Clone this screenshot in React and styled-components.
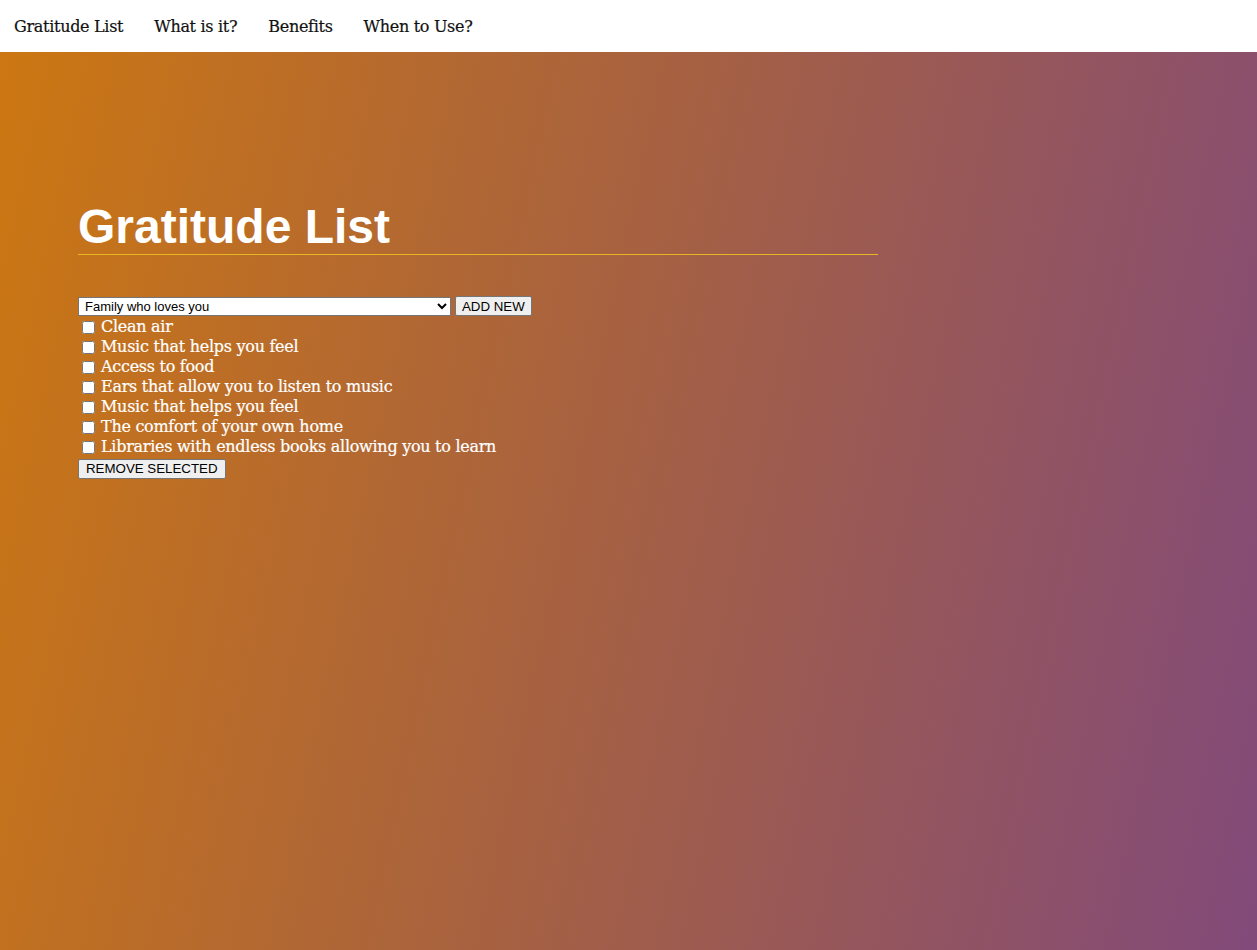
import React from "react";
import styled, { createGlobalStyle } from "styled-components";

const Global = createGlobalStyle`
  html, body { margin: 0; padding: 0; }
  body { font-family: "DejaVu Serif", serif; }
`;

const Nav = styled.nav`
  height: 52px;
  background: #ffffff;
  display: flex;
  align-items: center;
  padding-left: 14px;
  gap: 31px;
`;

const NavLink = styled.a`
  font-family: "DejaVu Serif", serif;
  font-size: 16px;
  color: #111;
  text-decoration: none;
  letter-spacing: -0.3px;
  -webkit-text-stroke: 0.2px #111;
`;

const Main = styled.main`
  min-height: 898px;
  background: linear-gradient(102deg, #cc7712 0%, #a8623f 45%, #824a7a 100%);
  padding: 148px 78px 0;
  box-sizing: border-box;
`;

const Title = styled.h1`
  font-family: "Liberation Sans", Arial, sans-serif;
  font-weight: 700;
  font-size: 48px;
  color: #fff;
  margin: 0;
  width: 800px;
  line-height: 54px;
  border-bottom: 1px solid #e6b624;
`;

const Controls = styled.div`
  margin-top: 41px;
  display: flex;
  align-items: center;
  gap: 4px;
`;

const Select = styled.select`
  width: 373px;
  height: 19px;
  font-family: "Liberation Sans", Arial, sans-serif;
  font-size: 13px;
  padding: 0 0 0 2px;
  border: 1px solid #767676;
  border-radius: 0;
  background: #fff;
  color: #000;
`;

const Button = styled.button`
  font-family: "Liberation Sans", Arial, sans-serif;
  font-size: 13.3px;
  height: 20px;
  padding: 0 ${(p) => p.$pad || 6}px;
  background: #efefef;
  border: 1px solid #767676;
  border-radius: 2px;
  color: #000;
`;

const List = styled.ul`
  list-style: none;
  margin: 1px 0 0;
  padding: 0;
`;

const Item = styled.li`
  font-family: "DejaVu Serif", serif;
  font-size: 16px;
  line-height: 20px;
  height: 20px;
  color: #fff;
  letter-spacing: -0.28px;
  -webkit-text-stroke: 0.2px #fff;
  display: flex;
  align-items: center;
`;

const Check = styled.input`
  margin: 0 6px 0 4px;
  width: 13px;
  height: 13px;
`;

const Footer = styled.div`
  margin-top: 1px;
`;

const items = [
  "Clean air",
  "Music that helps you feel",
  "Access to food",
  "Ears that allow you to listen to music",
  "Music that helps you feel",
  "The comfort of your own home",
  "Libraries with endless books allowing you to learn",
];

export default function App() {
  return (
    <>
      <Global />
      <Nav>
        <NavLink href="#">Gratitude List</NavLink>
        <NavLink href="#">What is it?</NavLink>
        <NavLink href="#">Benefits</NavLink>
        <NavLink href="#">When to Use?</NavLink>
      </Nav>
      <Main>
        <Title>Gratitude List</Title>
        <Controls>
          <Select defaultValue="Family who loves you">
            <option>Family who loves you</option>
            <option>Clean air</option>
            <option>Access to food</option>
          </Select>
          <Button>ADD NEW</Button>
        </Controls>
        <List>
          {items.map((t, i) => (
            <Item key={i}>
              <Check type="checkbox" />
              {t}
            </Item>
          ))}
        </List>
        <Footer>
          <Button $pad={7}>REMOVE SELECTED</Button>
        </Footer>
      </Main>
    </>
  );
}
